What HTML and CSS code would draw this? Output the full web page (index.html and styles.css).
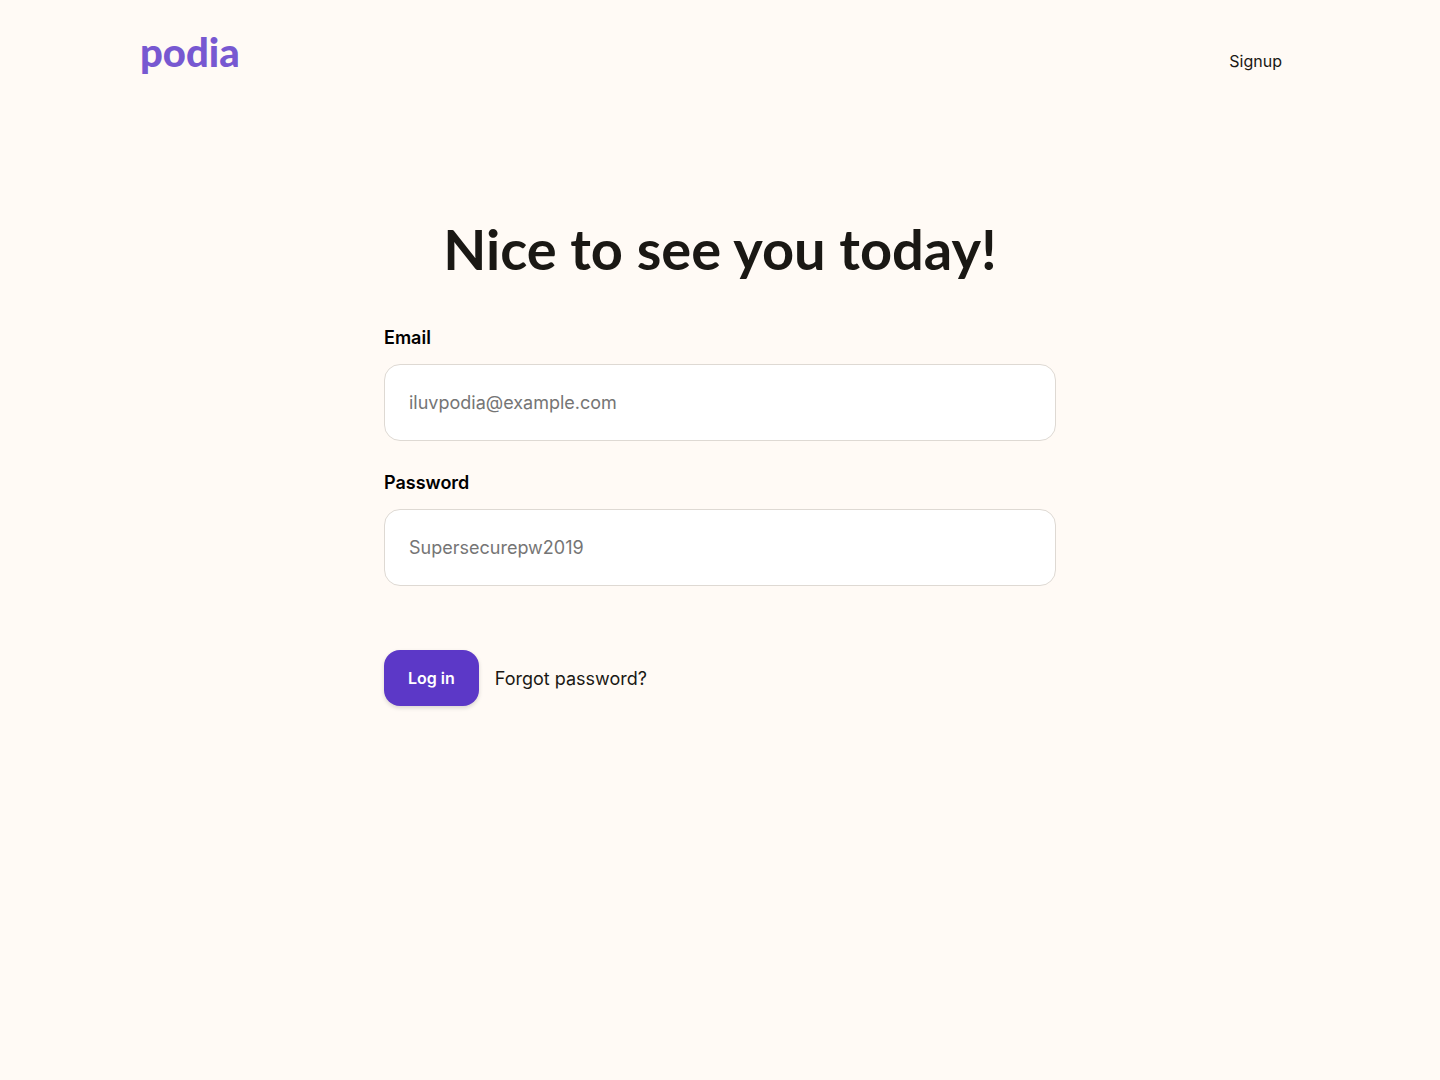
FILE: index.html
```html
<!DOCTYPE html>
<html lang="en">
<head>
    <meta charset="UTF-8">
    <meta name="viewport" content="width=device-width, initial-scale=1.0">
    <title>Log in | Podia</title>
    <link rel="stylesheet" href="styles.css">
</head>
<body>
    <header class="site-header">
        <a class="logo" href="/">podia</a>
        <nav>
            <a class="nav-link" href="/signup">Signup</a>
        </nav>
    </header>

    <main class="login">
        <h1>Nice to see you today!</h1>

        <form class="login-form" action="/login" method="post">
            <div class="field">
                <label for="email">Email</label>
                <input type="email" id="email" name="email" placeholder="iluvpodia@example.com">
            </div>
            <div class="field">
                <label for="password">Password</label>
                <input type="password" id="password" name="password" placeholder="Supersecurepw2019">
            </div>
            <div class="actions">
                <button type="submit">Log in</button>
                <a href="/password/new">Forgot password?</a>
            </div>
        </form>
    </main>
</body>
</html>
```

FILE: styles.css
```css
:root {
    --primary-color: #5c38c7;
    --logo-color: #7758d1;
    --text-color: #1a1814;
    --bg-color: #fffaf5;
    --border-color: #ded9d3;
}

* {
    margin: 0;
    padding: 0;
    box-sizing: border-box;
}

body {
    font-family: Inter, sans-serif;
    font-size: 18px;
    line-height: 27px;
    background-color: var(--bg-color);
    color: var(--text-color);
}

a {
    color: inherit;
    text-decoration: none;
}

.site-header {
    display: flex;
    justify-content: space-between;
    align-items: baseline;
    max-width: 1200px;
    margin: 0 auto;
    padding: 24px 20px 40px;
}

.logo {
    font-family: Lato, sans-serif;
    font-size: 40px;
    font-weight: 900;
    line-height: 56px;
    color: var(--logo-color);
}

.nav-link {
    padding: 0 18px;
    font-size: 16px;
}

.login {
    max-width: 704px;
    margin: 0 auto;
    padding: 96px 16px;
}

h1 {
    margin-bottom: 42px;
    font-family: Lato, sans-serif;
    font-size: 56px;
    font-weight: 700;
    line-height: 66px;
    text-align: center;
}

.field {
    margin-bottom: 28px;
}

label {
    display: block;
    margin-bottom: 13px;
    font-weight: 600;
    color: #000;
}

input {
    display: block;
    width: 100%;
    padding: 24px;
    border: 1px solid var(--border-color);
    border-radius: 16px;
    background: #fff;
    font: inherit;
    color: var(--text-color);
}

input::placeholder {
    color: #757575;
}

.actions {
    display: flex;
    align-items: center;
    gap: 16px;
    margin-top: 64px;
}

button {
    padding: 14px 24px;
    border: none;
    border-radius: 16px;
    background: var(--primary-color);
    box-shadow: 0 2px 4px rgba(0, 0, 0, 0.15);
    font: inherit;
    font-size: 16px;
    font-weight: 600;
    line-height: 28px;
    color: #fff;
    cursor: pointer;
}

button:hover {
    opacity: 0.9;
}
```
